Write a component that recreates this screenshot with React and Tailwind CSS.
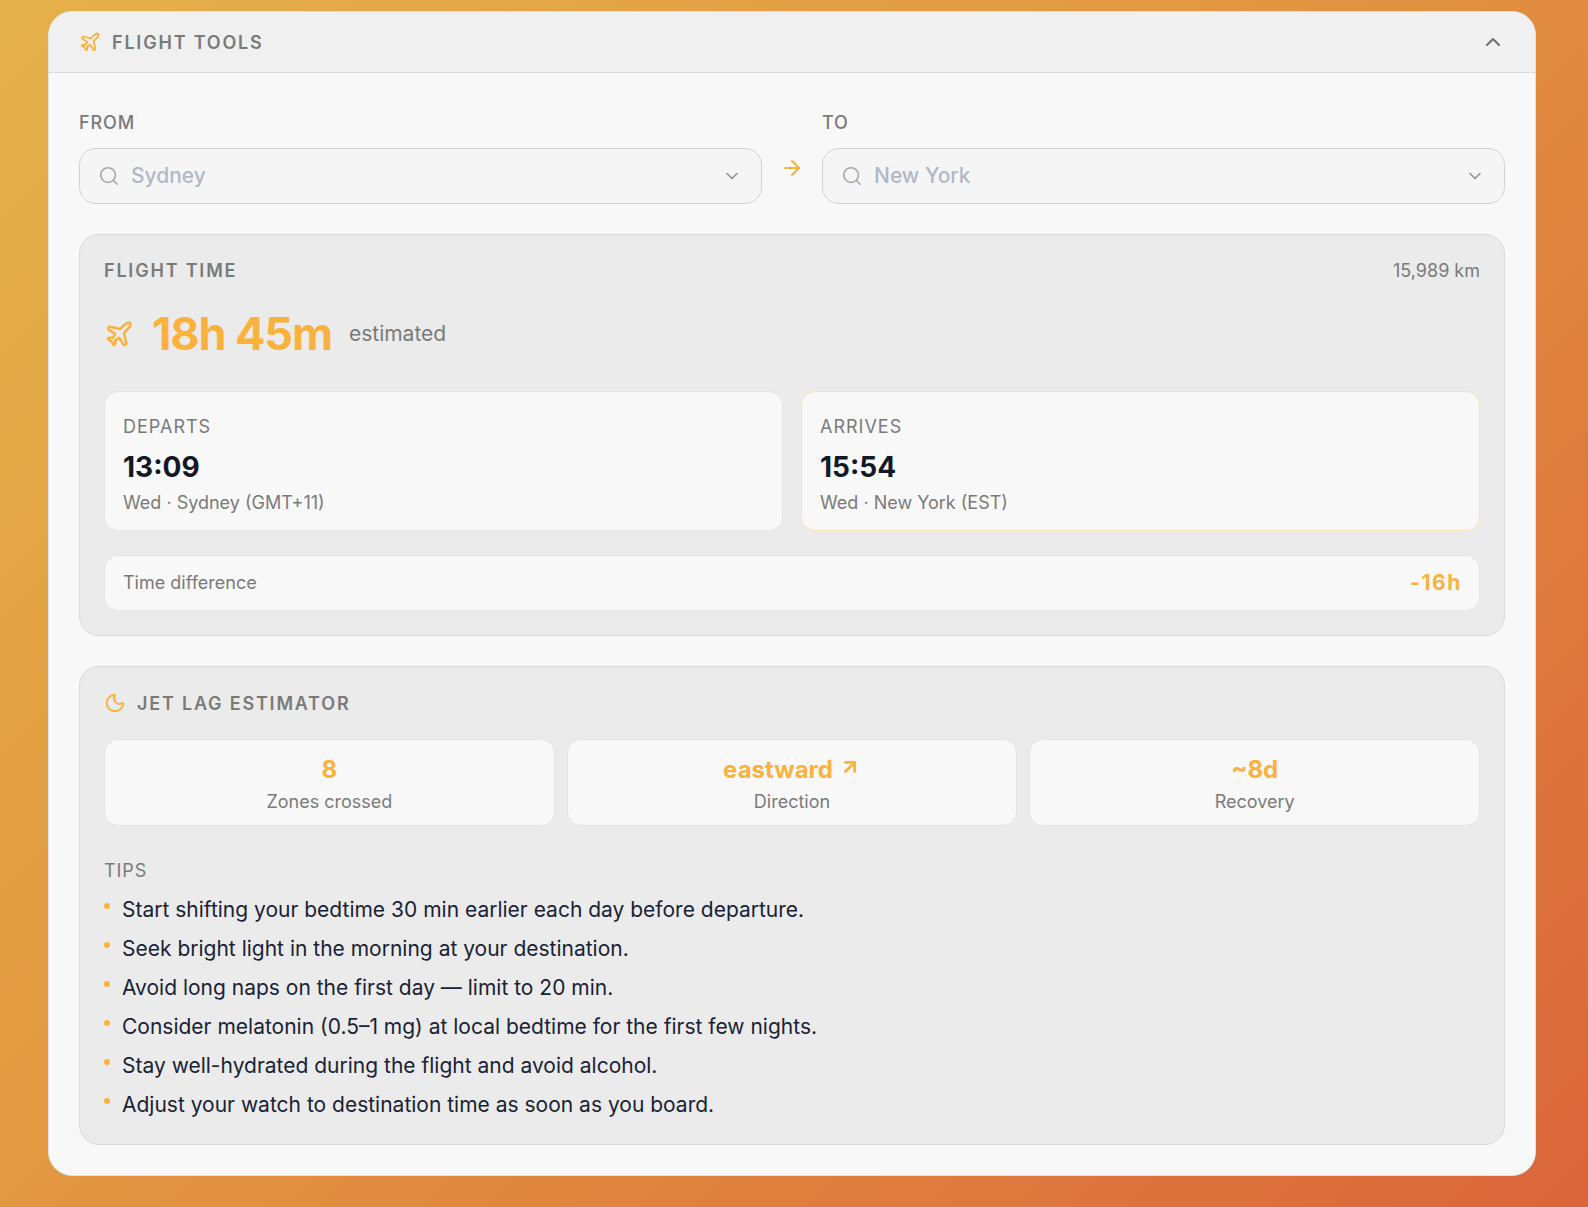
import { ArrowRight, ArrowUpRight, ChevronDown, ChevronUp, Moon, Plane, Search } from 'lucide-react';

const tips = [
  'Start shifting your bedtime 30 min earlier each day before departure.',
  'Seek bright light in the morning at your destination.',
  'Avoid long naps on the first day — limit to 20 min.',
  'Consider melatonin (0.5–1 mg) at local bedtime for the first few nights.',
  'Stay well-hydrated during the flight and avoid alcohol.',
  'Adjust your watch to destination time as soon as you board.',
];

const CityField = ({ label, city }) => (
  <div className="flex-1 min-w-0">
    <div className="text-[18px] leading-[22px] font-medium tracking-[0.9px] text-[#7a7a7a] mb-[14px]">{label}</div>
    <div className="h-[56px] rounded-[17px] border border-[#d2d2d2] bg-[#f5f5f5] flex items-center pl-[18px] pr-[19px]">
      <Search size={22} strokeWidth={1.8} className="text-[#a6a9b0] shrink-0" />
      <span className="ml-[11px] pb-[1px] flex-1 text-[21px] font-medium text-[#b1b8c7]">{city}</span>
      <ChevronDown size={20} strokeWidth={2} className="text-[#8f9298]" />
    </div>
  </div>
);

const TimeCard = ({ label, time, place, highlight }) => (
  <div className={`flex-1 h-[140px] rounded-[14px] border bg-[#f8f8f8] px-[18px] pt-[24px] ${highlight ? 'border-[#fbe3b8]' : 'border-[#e6e6e6]'}`}>
    <div className="text-[18px] leading-[22px] tracking-[1px] text-[#7a7a7a]">{label}</div>
    <div className="text-[28px] leading-[36px] font-bold text-[#111827] mt-[11px]">{time}</div>
    <div className="text-[18px] leading-[24px] text-[#7a7a7a] mt-[6px]">{place}</div>
  </div>
);

const StatCard = ({ value, label, icon }) => (
  <div className="flex-1 h-[87px] rounded-[14px] border border-[#e6e6e6] bg-[#f8f8f8] flex flex-col items-center pt-[15px]">
    <div className="flex items-center text-[24px] leading-[30px] font-bold text-[#fab23d]">
      {value}
      {icon}
    </div>
    <div className="text-[18px] leading-[24px] text-[#7a7a7a] mt-[5px]">{label}</div>
  </div>
);

export default function App() {
  return (
    <div className="min-h-[1207px] pl-[48px] pt-[11px] pb-[32px] bg-[linear-gradient(135deg,#e4b14a_0%,#e39a42_40%,#db653a_100%)] font-['Inter',sans-serif]">
      <div className="w-[1488px] rounded-[24px] border border-[#e2e2e2] bg-[#f8f8f8] overflow-hidden">
        {/* Header */}
        <div className="h-[61px] bg-[#f0f0f0] border-b border-[#d9d9d9] flex items-center pl-[30px] pr-[30px]">
          <Plane size={22} strokeWidth={2} className="text-[#fab23d]" />
          <span className="ml-[11px] text-[18px] font-semibold tracking-[1.8px] text-[#7a7a7a]">FLIGHT TOOLS</span>
          <ChevronUp size={24} strokeWidth={2} className="ml-auto text-[#6f6f6f]" />
        </div>

        <div className="px-[30px] pt-[39px] pb-[30px]">
          {/* From / To */}
          <div className="flex items-end">
            <CityField label="FROM" city="Sydney" />
            <div className="w-[60px] h-[56px] flex justify-center pt-[8px]">
              <ArrowRight size={24} strokeWidth={2} className="text-[#fab23d]" />
            </div>
            <CityField label="TO" city="New York" />
          </div>

          {/* Flight time */}
          <div className="mt-[30px] rounded-[20px] border border-[#d9d9d9] bg-[#ebebeb] px-[24px] pt-[23px] pb-[24px]">
            <div className="flex items-center justify-between h-[24px]">
              <span className="text-[18px] font-semibold tracking-[1.8px] text-[#7a7a7a]">FLIGHT TIME</span>
              <span className="text-[18px] text-[#7a7a7a]">15,989 km</span>
            </div>
            <div className="flex items-center mt-[20px] h-[64px]">
              <Plane size={30} strokeWidth={2} className="text-[#fab23d]" />
              <span className="ml-[18px] text-[45px] font-bold tracking-[-1.1px] text-[#fab23d]">18h 45m</span>
              <span className="ml-[17px] text-[21px] text-[#7a7a7a]">estimated</span>
            </div>
            <div className="flex gap-[18px] mt-[25px]">
              <TimeCard label="DEPARTS" time="13:09" place="Wed · Sydney (GMT+11)" />
              <TimeCard label="ARRIVES" time="15:54" place="Wed · New York (EST)" highlight />
            </div>
            <div className="mt-[24px] h-[56px] rounded-[14px] border border-[#e6e6e6] bg-[#f8f8f8] flex items-center justify-between pl-[18px] pr-[17px]">
              <span className="pb-[1px] text-[18px] text-[#7a7a7a]">Time difference</span>
              <span className="text-[21px] font-bold tracking-[1.6px] text-[#fab23d]">-16h</span>
            </div>
          </div>

          {/* Jet lag */}
          <div className="mt-[30px] rounded-[20px] border border-[#d9d9d9] bg-[#ebebeb] px-[24px] pt-[24px] pb-[19px]">
            <div className="flex items-center h-[24px]">
              <Moon size={22} strokeWidth={2} className="text-[#fab23d]" />
              <span className="ml-[11px] text-[18px] font-semibold tracking-[1.8px] text-[#7a7a7a]">JET LAG ESTIMATOR</span>
            </div>
            <div className="flex gap-[12px] mt-[24px]">
              <StatCard value="8" label="Zones crossed" />
              <StatCard value="eastward" label="Direction" icon={<ArrowUpRight size={22} strokeWidth={3} className="ml-[6px] -mt-[6px]" />} />
              <StatCard value="~8d" label="Recovery" />
            </div>
            <div className="text-[18px] leading-[22px] tracking-[0.9px] text-[#7a7a7a] mt-[34px]">TIPS</div>
            <ul className="mt-[8px] flex flex-col">
              {tips.map(tip => (
                <li key={tip} className="flex items-start h-[39.1px] text-[21px] leading-[39px] text-[#1a2235]">
                  <span className="w-[6px] h-[6px] rounded-full bg-[#fab23d] mt-[13px] mr-[12px] shrink-0" />
                  {tip}
                </li>
              ))}
            </ul>
          </div>
        </div>
      </div>
    </div>
  );
}
